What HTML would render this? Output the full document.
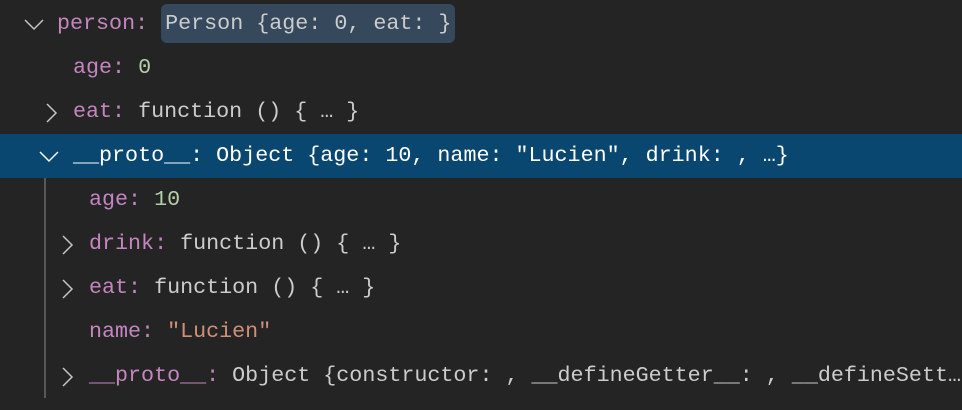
<!DOCTYPE html>
<html><head><style>
html,body{margin:0;padding:0;width:962px;height:410px;background:#242424;overflow:hidden}
.r{position:absolute;left:0;width:962px;height:44px;line-height:44px;font-family:"Liberation Mono",monospace;font-size:21.7px;color:#cccccc;white-space:nowrap;overflow:hidden}
.n{color:#c586c0}.num{color:#b5cea8}.s{color:#ce9178}
.t{position:absolute;top:0}
.sel{background:#094771;color:#fff}
.box{background:#36495c;border-radius:6px;padding:7px 4px}
svg{position:absolute;top:12px}
.guide{position:absolute;left:44px;top:178px;width:2px;height:220px;background:#585858}
</style></head><body>
<div class="r" style="top:2px"><svg style="left:23px" width="22" height="20" viewBox="0 0 22 20"><path d="M2 6l9 9 9-9" stroke="#c5c5c5" stroke-width="1.5" fill="none"/></svg><span class="t" style="left:57px"><span class="n">person:</span> <span class="box">Person {age: 0, eat: }</span></span></div>
<div class="r" style="top:46px"><span class="t" style="left:73px"><span class="n">age:</span> <span class="num">0</span></span></div>
<div class="r" style="top:90px"><svg style="left:42px" width="20" height="22" viewBox="0 0 20 22"><path d="M5 2l9 9-9 9" stroke="#c5c5c5" stroke-width="1.5" fill="none"/></svg><span class="t" style="left:73px"><span class="n">eat:</span> function () { … }</span></div>
<div class="r sel" style="top:134px"><svg style="left:38px" width="22" height="20" viewBox="0 0 22 20"><path d="M2 6l9 9 9-9" stroke="#fff" stroke-width="1.5" fill="none"/></svg><span class="t" style="left:73px">__proto__: Object {age: 10, name: "Lucien", drink: , …}</span></div>
<div class="guide"></div>
<div class="r" style="top:178px"><span class="t" style="left:89px"><span class="n">age:</span> <span class="num">10</span></span></div>
<div class="r" style="top:222px"><svg style="left:58px" width="20" height="22" viewBox="0 0 20 22"><path d="M5 2l9 9-9 9" stroke="#c5c5c5" stroke-width="1.5" fill="none"/></svg><span class="t" style="left:89px"><span class="n">drink:</span> function () { … }</span></div>
<div class="r" style="top:266px"><svg style="left:58px" width="20" height="22" viewBox="0 0 20 22"><path d="M5 2l9 9-9 9" stroke="#c5c5c5" stroke-width="1.5" fill="none"/></svg><span class="t" style="left:89px"><span class="n">eat:</span> function () { … }</span></div>
<div class="r" style="top:310px"><span class="t" style="left:89px"><span class="n">name:</span> <span class="s">"Lucien"</span></span></div>
<div class="r" style="top:354px"><svg style="left:58px" width="20" height="22" viewBox="0 0 20 22"><path d="M5 2l9 9-9 9" stroke="#c5c5c5" stroke-width="1.5" fill="none"/></svg><span class="t" style="left:89px"><span class="n">__proto__:</span> Object {constructor: , __defineGetter__: , __defineSett…</span></div>
</body></html>
